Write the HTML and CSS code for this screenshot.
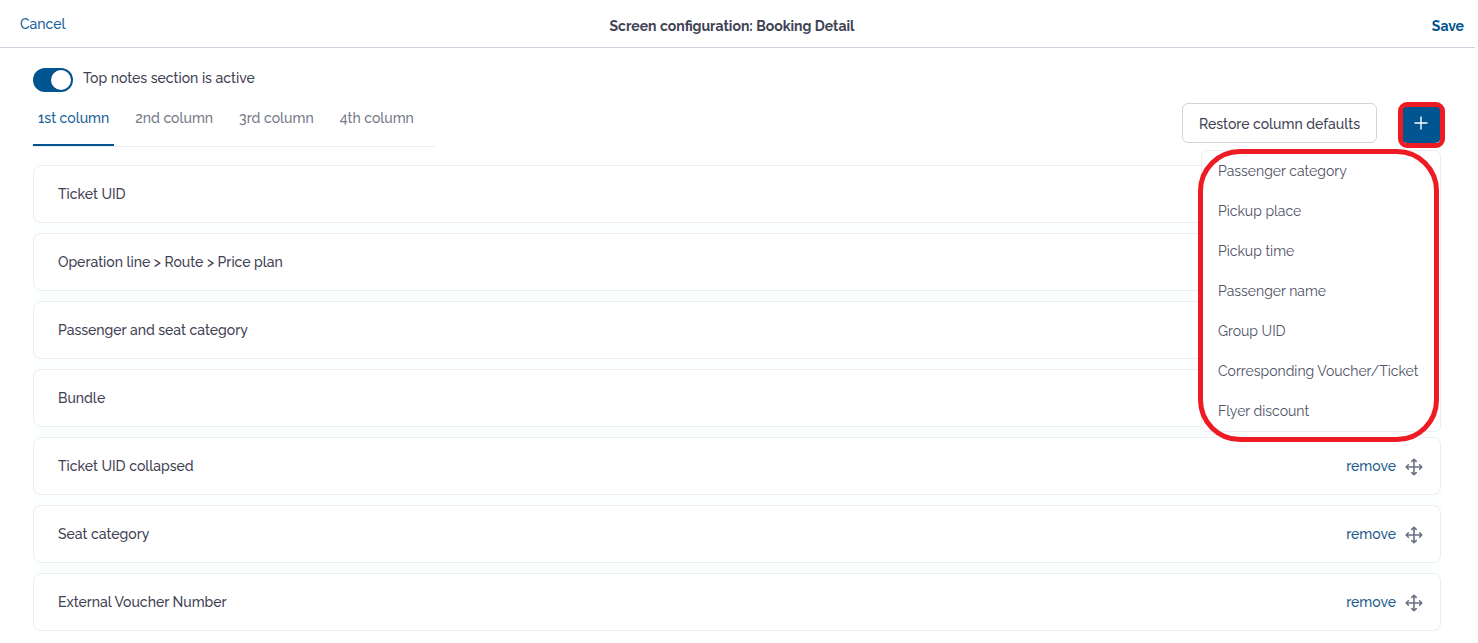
FILE: index.html
```html
<!DOCTYPE html>
<html lang="en">
<head>
<meta charset="utf-8">
<meta name="viewport" content="width=device-width, initial-scale=1">
<title>Screen configuration: Booking Detail</title>
<link rel="stylesheet" href="styles.css">
</head>
<body>
<svg class="sprite" aria-hidden="true">
  <symbol id="move" viewBox="0 0 18 18">
    <path d="M9 1.500V16.500M1.500 9H16.500M6.800 3.400L9 1.200L11.200 3.400M6.800 14.600L9 16.800L11.200 14.600M3.400 6.800L1.200 9L3.400 11.200M14.600 6.800L16.800 9L14.600 11.200" fill="none" stroke="currentColor" stroke-width="1.600" stroke-linecap="round" stroke-linejoin="round"/>
  </symbol>
</svg>
<header class="topbar">
  <a class="cancel" href="#">Cancel</a>
  <h1 class="title">Screen configuration: Booking Detail</h1>
  <button class="save" type="button">Save</button>
</header>
<main class="content">
  <label class="switch">
    <input class="switch-input" type="checkbox" role="switch" checked>
    <span class="switch-label">Top notes section is active</span>
  </label>
  <div class="toolbar">
    <nav class="tabs" aria-label="Columns">
      <a class="tab tab-active" href="#" aria-current="true">1st column</a>
      <a class="tab" href="#">2nd column</a>
      <a class="tab" href="#">3rd column</a>
      <a class="tab" href="#">4th column</a>
    </nav>
    <div class="actions">
      <button class="restore" type="button">Restore column defaults</button>
      <div class="add-wrap">
        <button class="add" type="button" aria-label="Add field" aria-expanded="true">
          <svg width="14" height="14" viewBox="0 0 14 14" aria-hidden="true"><path d="M7 0.500V13.500M0.500 7H13.500" stroke="currentColor" stroke-width="1.400"/></svg>
        </button>
        <div class="menu">
          <button class="menu-item" type="button">Passenger category</button>
          <button class="menu-item" type="button">Pickup place</button>
          <button class="menu-item" type="button">Pickup time</button>
          <button class="menu-item" type="button">Passenger name</button>
          <button class="menu-item" type="button">Group UID</button>
          <button class="menu-item" type="button">Corresponding Voucher/Ticket</button>
          <button class="menu-item" type="button">Flyer discount</button>
        </div>
      </div>
    </div>
  </div>
  <ul class="rows">
    <li class="row"><span class="name">Ticket UID</span></li>
    <li class="row"><span class="name">Operation line &gt; Route &gt; Price plan</span></li>
    <li class="row"><span class="name">Passenger and seat category</span></li>
    <li class="row"><span class="name">Bundle</span></li>
    <li class="row"><span class="name">Ticket UID collapsed</span><button class="remove" type="button">remove</button><svg class="move"><use href="#move"/></svg></li>
    <li class="row"><span class="name">Seat category</span><button class="remove" type="button">remove</button><svg class="move"><use href="#move"/></svg></li>
    <li class="row"><span class="name">External Voucher Number</span><button class="remove" type="button">remove</button><svg class="move"><use href="#move"/></svg></li>
  </ul>
</main>
</body>
</html>
```
FILE: styles.css
```css
* {
  box-sizing: border-box;
}

body {
  margin: 0 3px 0 0;
  background: #fff;
  color: #3f4254;
  font-family: Raleway, Lato, "Open Sans", sans-serif;
  font-size: 14px;
  font-weight: 500;
  line-height: 20px;
}

button {
  margin: 0;
  padding: 0;
  border: 0;
  background: none;
  color: inherit;
  font: inherit;
  cursor: pointer;
}

a {
  text-decoration: none;
}

.sprite {
  position: absolute;
  width: 0;
  height: 0;
}

.topbar {
  display: grid;
  grid-template-columns: 1fr auto 1fr;
  align-items: start;
  padding: 16px 11px 11px 0;
  border-bottom: 1px solid #d1d1e0;
}

.cancel {
  justify-self: start;
  margin-top: -2px;
  padding-left: 20px;
  color: #1a629b;
}

.title {
  margin: 0;
  font-size: 14px;
  font-weight: 700;
}

.save {
  justify-self: end;
  color: #00548f;
  font-weight: 700;
}

.content {
  padding: 20px 34px 12px 33px;
}

.switch {
  display: flex;
  align-items: flex-start;
  gap: 10px;
}

.switch-input {
  appearance: none;
  display: flex;
  justify-content: flex-end;
  width: 40px;
  height: 24px;
  margin: 0;
  padding: 2px;
  border-radius: 12px;
  background: #00548f;
}

.switch-input::before {
  content: "";
  width: 20px;
  height: 20px;
  border-radius: 50%;
  background: #fff;
}

.toolbar {
  display: flex;
  justify-content: space-between;
  align-items: flex-start;
  padding-top: 11px;
}

.tabs {
  display: flex;
  gap: 16px;
  padding-right: 16px;
  border-bottom: 1px solid #ebedf0;
}

.tab {
  padding: 5px 5px 16px;
  border-bottom: 2px solid transparent;
  color: #757a88;
}

.tab-active {
  border-color: #00548f;
  color: #1a629b;
}

.actions {
  display: flex;
  gap: 24px;
}

.restore {
  height: 40px;
  padding: 2px 16px 0;
  border: 1px solid #d0d4dc;
  border-radius: 6px;
}

.add-wrap {
  position: relative;
}

.add {
  display: grid;
  place-items: center;
  width: 40px;
  height: 40px;
  border-radius: 6px;
  background: #00548f;
  color: #fff;
}

.add::after {
  content: "";
  position: absolute;
  inset: -1px -4px -5px -3px;
  border: 5px solid #ed1c24;
  border-radius: 9px;
}

.menu {
  position: absolute;
  top: 47px;
  right: 0;
  width: 240px;
  border: 1px solid #ebedf0;
  border-radius: 6px;
  background: #fff;
}

.menu::after {
  content: "";
  position: absolute;
  inset: -2px 1px -11px -4px;
  border: 5px solid #ed1c24;
  border-radius: 42px;
  pointer-events: none;
}

.menu-item {
  display: block;
  width: 100%;
  height: 40px;
  padding: 0 16px;
  color: #4f5264;
  font-weight: 400;
  text-align: left;
  white-space: nowrap;
}

.rows {
  display: grid;
  gap: 10px;
  margin: 18px 0 0;
  padding: 0;
  background: #fdfefe;
  list-style: none;
}

.row {
  display: flex;
  align-items: center;
  min-height: 58px;
  padding: 0 17px 0 24px;
  border: 1px solid #ebeef0;
  border-radius: 8px;
  background: #fff;
}

.name {
  flex: 1;
}

.remove {
  margin-right: 9px;
  color: #1f5c8c;
}

.move {
  width: 18px;
  height: 18px;
  margin-top: 2px;
  color: #6b7287;
}
```
